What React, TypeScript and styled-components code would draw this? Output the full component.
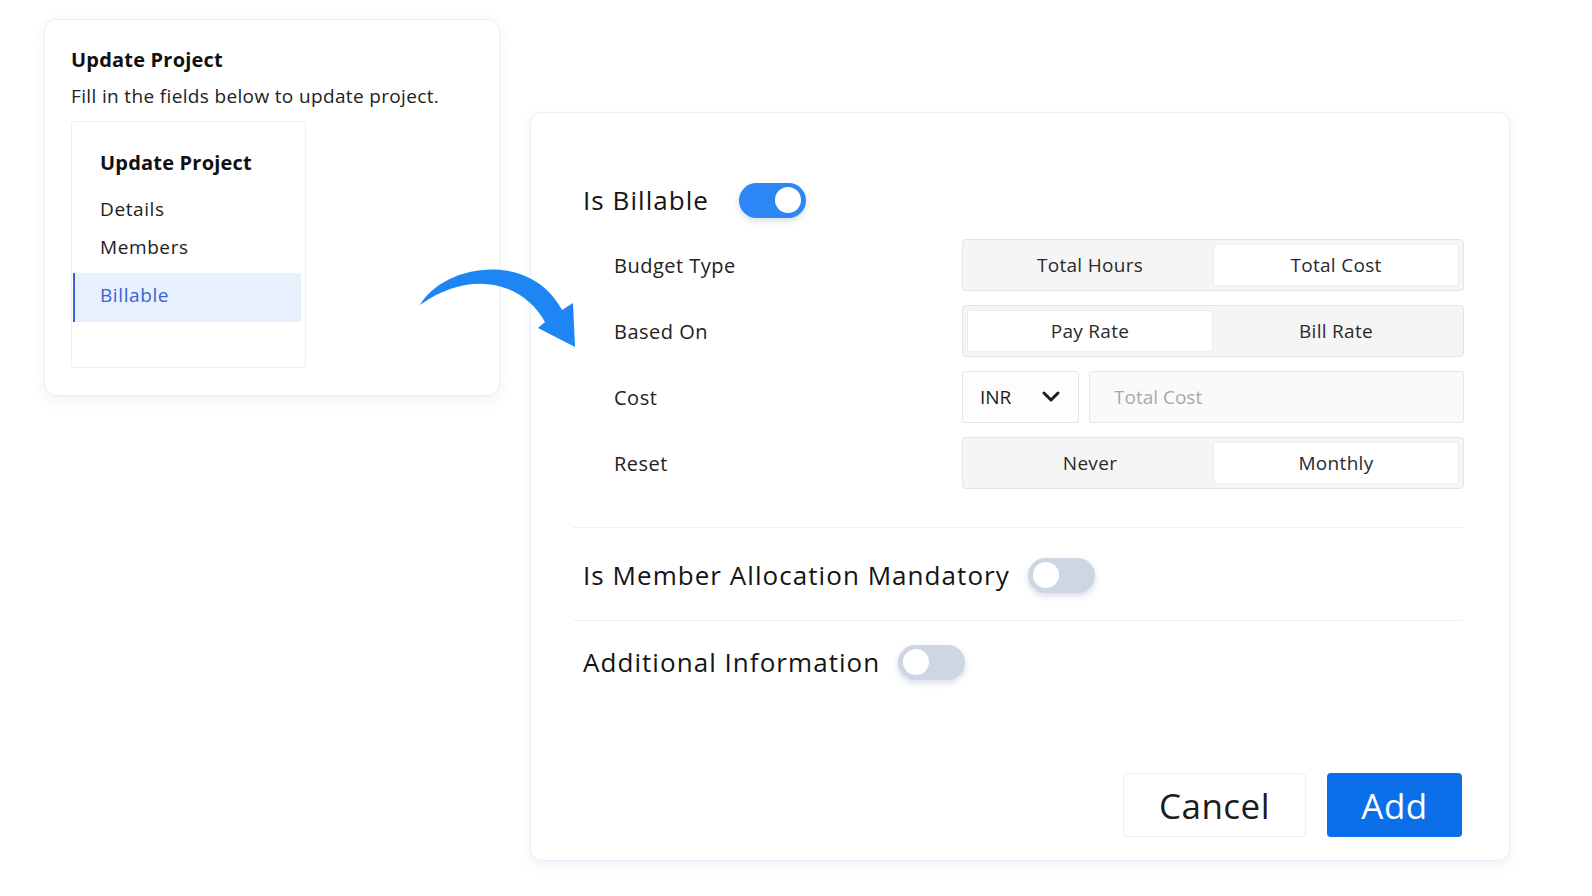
import styled, { createGlobalStyle } from 'styled-components';

const GlobalStyle = createGlobalStyle`
  html, body {
    margin: 0;
    padding: 0;
    background: #ffffff;
  }

  body {
    font-family: 'Open Sans', 'Noto Sans', sans-serif;
    color: #1c1c1c;
  }

  * {
    box-sizing: border-box;
  }
`;

type Option = { label: string; active?: boolean };

const formRows: { label: string; options?: Option[] }[] = [
  { label: 'Budget Type', options: [{ label: 'Total Hours' }, { label: 'Total Cost', active: true }] },
  { label: 'Based On', options: [{ label: 'Pay Rate', active: true }, { label: 'Bill Rate' }] },
  { label: 'Cost' },
  { label: 'Reset', options: [{ label: 'Never' }, { label: 'Monthly', active: true }] },
];

function Toggle({ on }: { on?: boolean }) {
  return (
    <StyledToggle $on={on}>
      <StyledKnob />
    </StyledToggle>
  );
}

function Arrow() {
  return (
    <StyledArrow width='162' height='84' viewBox='0 0 162 84'>
      <path
        d='M2 37 C26 -4 112 -18 144 42 L155 35 L157 79 L120 60 L127 54 C104 12 50 2 2 37 Z'
        fill='#1d85f4'
      />
    </StyledArrow>
  );
}

function App() {
  return (
    <>
      <GlobalStyle />
      <StyledPage>
        <StyledSideCard>
          <StyledTitle>Update Project</StyledTitle>
          <StyledSubtitle>Fill in the fields below to update project.</StyledSubtitle>
          <StyledNav>
            <StyledNavTitle>Update Project</StyledNavTitle>
            <StyledNavItem>Details</StyledNavItem>
            <StyledNavItem>Members</StyledNavItem>
            <StyledNavItem $active>Billable</StyledNavItem>
          </StyledNav>
        </StyledSideCard>

        <Arrow />

        <StyledMainCard>
          <StyledSectionRow $top={69} $gap={30}>
            <StyledSectionTitle>Is Billable</StyledSectionTitle>
            <Toggle on />
          </StyledSectionRow>

          <StyledForm>
            {formRows.map((row) => (
              <StyledFormRow key={row.label}>
                <StyledLabel>{row.label}</StyledLabel>
                {row.options ? (
                  <StyledSegmented>
                    {row.options.map((opt) => (
                      <StyledSegment key={opt.label} $active={opt.active}>
                        {opt.label}
                      </StyledSegment>
                    ))}
                  </StyledSegmented>
                ) : (
                  <StyledCostGroup>
                    <StyledSelect>
                      INR
                      <svg width='18' height='12' viewBox='0 0 18 12'>
                        <polyline
                          points='2,2 9,9 16,2'
                          fill='none'
                          stroke='#1c1c1c'
                          strokeWidth='3'
                          strokeLinecap='round'
                          strokeLinejoin='round'
                        />
                      </svg>
                    </StyledSelect>
                    <StyledInput placeholder='Total Cost' readOnly />
                  </StyledCostGroup>
                )}
              </StyledFormRow>
            ))}
          </StyledForm>

          <StyledDivider $top={38} />

          <StyledSectionRow $top={29} $gap={18}>
            <StyledSectionTitle>Is Member Allocation Mandatory</StyledSectionTitle>
            <Toggle />
          </StyledSectionRow>

          <StyledDivider $top={27} />

          <StyledSectionRow $top={23} $gap={18}>
            <StyledSectionTitle>Additional Information</StyledSectionTitle>
            <Toggle />
          </StyledSectionRow>

          <StyledActions>
            <StyledCancelButton>Cancel</StyledCancelButton>
            <StyledAddButton>Add</StyledAddButton>
          </StyledActions>
        </StyledMainCard>
      </StyledPage>
    </>
  );
}

export default App;

const StyledPage = styled.div`
  position: relative;
  display: flex;
  align-items: flex-start;
  gap: 30px;
  width: 1592px;
  height: 896px;
  padding: 19px 0 0 44px;
  overflow: hidden;
`;

const StyledSideCard = styled.div`
  display: flex;
  flex-direction: column;
  width: 456px;
  height: 377px;
  padding: 28px 0 0 26px;
  border: 1px solid #e9edf8;
  border-radius: 12px;
  background: #ffffff;
  box-shadow: 0 4px 14px rgba(90, 110, 200, 0.09);
`;

const StyledTitle = styled.div`
  font-size: 20px;
  font-weight: 700;
  line-height: 24px;
  letter-spacing: 0.2px;
  color: #111111;
`;

const StyledSubtitle = styled.div`
  margin-top: 13px;
  font-size: 19px;
  line-height: 23px;
  letter-spacing: 0.35px;
  color: #222222;
`;

const StyledNav = styled.div`
  display: flex;
  flex-direction: column;
  width: 235px;
  height: 247px;
  margin-top: 13px;
  padding-top: 29px;
  border: 1px solid #eceef6;
  border-radius: 3px;
`;

const StyledNavTitle = styled.div`
  padding-left: 28px;
  margin-bottom: 22px;
  font-size: 20px;
  font-weight: 700;
  line-height: 24px;
  letter-spacing: 0.2px;
  color: #111111;
`;

const StyledNavItem = styled.div<{ $active?: boolean }>`
  display: flex;
  align-items: center;
  height: ${({ $active }) => ($active ? '49px' : '23px')};
  margin: ${({ $active }) => ($active ? '0 4px 0 1px' : '0 0 15px 0')};
  padding-left: ${({ $active }) => ($active ? '25px' : '28px')};
  padding-bottom: ${({ $active }) => ($active ? '5px' : '0')};
  border-left: ${({ $active }) => ($active ? '2px solid #3d5fd8' : 'none')};
  background: ${({ $active }) => ($active ? '#e7f0fd' : 'transparent')};
  font-size: 19px;
  letter-spacing: 0.6px;
  color: ${({ $active }) => ($active ? '#3a63d8' : '#1c1c1c')};
`;

const StyledArrow = styled.svg`
  position: absolute;
  left: 418px;
  top: 268px;
`;

const StyledMainCard = styled.div`
  display: flex;
  flex-direction: column;
  width: 980px;
  height: 749px;
  margin-top: 93px;
  padding: 0 47px 23px 42px;
  border: 1px solid #e9edf8;
  border-radius: 12px;
  background: #ffffff;
  box-shadow: 0 4px 14px rgba(90, 110, 200, 0.09);
`;

const StyledSectionRow = styled.div<{ $top: number; $gap: number }>`
  display: flex;
  align-items: center;
  gap: ${({ $gap }) => $gap}px;
  height: 36px;
  margin-top: ${({ $top }) => $top}px;
  padding-left: 10px;
`;

const StyledSectionTitle = styled.div`
  font-size: 26px;
  font-weight: 400;
  letter-spacing: 1.05px;
  color: #141414;
`;

const StyledToggle = styled.div<{ $on?: boolean }>`
  display: flex;
  align-items: center;
  justify-content: ${({ $on }) => ($on ? 'flex-end' : 'flex-start')};
  width: 67px;
  height: 35px;
  padding: 0 5px;
  border-radius: 18px;
  background: ${({ $on }) => ($on ? '#2d86f6' : '#cdd6e2')};
  box-shadow: 0 3px 6px rgba(60, 80, 120, 0.2);
`;

const StyledKnob = styled.div`
  width: 26px;
  height: 26px;
  border-radius: 50%;
  background: #ffffff;
`;

const StyledForm = styled.div`
  display: flex;
  flex-direction: column;
  gap: 14px;
  margin-top: 21px;
`;

const StyledFormRow = styled.div`
  display: grid;
  grid-template-columns: 389px 502px;
  align-items: center;
  height: 52px;
`;

const StyledLabel = styled.div`
  padding-left: 41px;
  font-size: 20px;
  letter-spacing: 0.5px;
  color: #222222;
`;

const StyledSegmented = styled.div`
  display: grid;
  grid-template-columns: 1fr 1fr;
  height: 52px;
  padding: 4px;
  border: 1px solid #e4e4e4;
  border-radius: 4px;
  background: #f5f5f5;
`;

const StyledSegment = styled.div<{ $active?: boolean }>`
  display: flex;
  align-items: center;
  justify-content: center;
  border: 1px solid ${({ $active }) => ($active ? '#ececf2' : 'transparent')};
  border-radius: 3px;
  background: ${({ $active }) => ($active ? '#ffffff' : 'transparent')};
  font-size: 19px;
  letter-spacing: 0.3px;
  color: #2a2a2a;
`;

const StyledCostGroup = styled.div`
  display: flex;
  gap: 10px;
  height: 52px;
`;

const StyledSelect = styled.div`
  display: flex;
  align-items: center;
  justify-content: space-between;
  width: 117px;
  padding: 0 18px 0 17px;
  border: 1px solid #e6e6e6;
  border-radius: 3px;
  background: #fdfdfd;
  font-size: 19px;
  color: #1c1c1c;
`;

const StyledInput = styled.input`
  flex: 1;
  min-width: 0;
  padding: 0 24px;
  border: 1px solid #e6e6e6;
  border-radius: 3px;
  background: #fafafa;
  font-family: inherit;
  font-size: 19px;
  outline: none;

  &::placeholder {
    color: #a9a9a9;
  }
`;

const StyledDivider = styled.div<{ $top: number }>`
  height: 1px;
  margin-top: ${({ $top }) => $top}px;
  background: #eef0f6;
`;

const StyledActions = styled.div`
  display: flex;
  justify-content: flex-end;
  gap: 21px;
  margin-top: auto;
`;

const StyledCancelButton = styled.button.attrs({ type: 'button' })`
  width: 183px;
  height: 64px;
  border: 1px solid #eceef6;
  border-radius: 4px;
  background: #ffffff;
  font-family: inherit;
  font-size: 35px;
  color: #1c1c1c;
  letter-spacing: 0.5px;
`;

const StyledAddButton = styled.button.attrs({ type: 'button' })`
  width: 135px;
  height: 64px;
  border: none;
  border-radius: 4px;
  background: #0a6fe8;
  font-family: inherit;
  font-size: 35px;
  color: #ffffff;
  letter-spacing: 0.5px;
`;
